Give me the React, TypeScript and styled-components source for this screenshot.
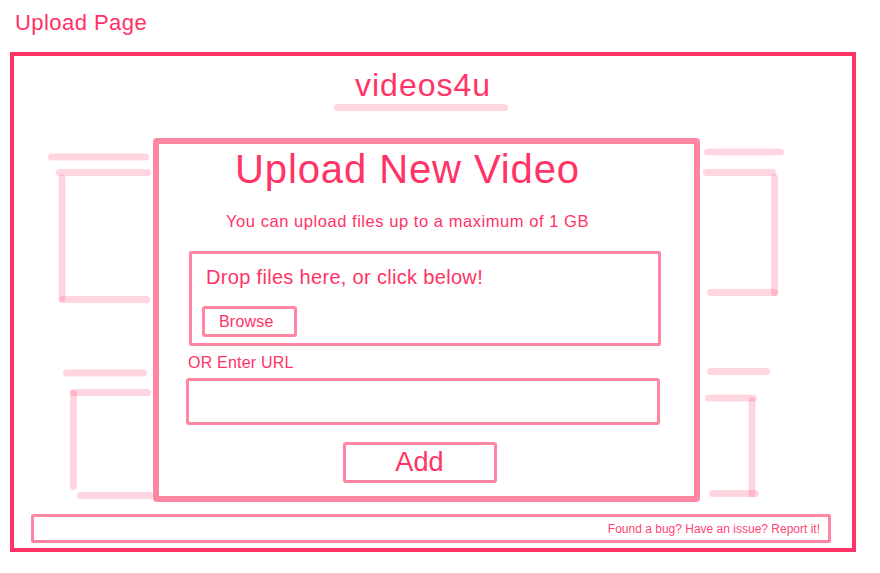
import React from "react";
import styled, { createGlobalStyle } from "styled-components";

const STRONG = "#ff3366";
const MID = "#ff86a3";
const LIGHT = "#ffd6e0";

const GlobalStyle = createGlobalStyle`
  html, body {
    margin: 0;
    padding: 0;
    background: #ffffff;
  }
  body {
    font-family: "Liberation Sans", Arial, sans-serif;
    color: ${STRONG};
  }
  * { box-sizing: border-box; }
`;

const Page = styled.div`
  padding: 12px 0 0 10px;
`;

const PageTitle = styled.h1`
  margin: 0 0 0 5px;
  height: 22px;
  font-size: 22px;
  line-height: 22px;
  letter-spacing: 0.45px;
  font-weight: 400;
  color: ${STRONG};
`;

const Frame = styled.div`
  margin-top: 18px;
  width: 846px;
  height: 500px;
  border: 4px solid ${STRONG};
  display: flex;
  flex-direction: column;
`;

const Header = styled.header`
  height: 82px;
  padding: 12.9px 0 0 320px;
  display: flex;
  flex-direction: column;
  align-items: flex-start;
`;

const Brand = styled.div`
  margin-left: 21px;
  font-size: 32px;
  line-height: 32px;
  letter-spacing: 1px;
`;

const BrandBar = styled.div`
  margin-top: 3px;
  width: 174px;
  height: 7px;
  border-radius: 4px;
  background: ${LIGHT};
`;

const Middle = styled.div`
  display: flex;
  height: 364px;
`;

const Card = styled.section`
  width: 547px;
  height: 364px;
  border: 6px solid ${MID};
  border-radius: 4px;
  padding-top: 5.4px;
  display: flex;
  flex-direction: column;
  align-items: flex-start;
`;

const Heading = styled.h2`
  margin: 0 0 0 76px;
  font-size: 40px;
  line-height: 40px;
  letter-spacing: 0.9px;
  font-weight: 400;
`;

const Note = styled.p`
  margin: 23.9px 0 0 67px;
  font-size: 16.5px;
  line-height: 16.5px;
  letter-spacing: 0.55px;
`;

const DropZone = styled.div`
  margin: 21.2px 0 0 30px;
  width: 472px;
  height: 95px;
  border: 3px solid ${MID};
  border-radius: 2px;
  padding: 13.4px 0 0 10px;
  display: flex;
  flex-direction: column;
  align-items: flex-start;
`;

const DropText = styled.div`
  margin-left: 4px;
  font-size: 20px;
  line-height: 20px;
  letter-spacing: 0.32px;
`;

const SketchButton = styled.button<{
  $w: number;
  $h: number;
  $size: number;
  $align: "start" | "center";
}>`
  width: ${(p) => p.$w}px;
  height: ${(p) => p.$h}px;
  border: 3px solid ${MID};
  border-radius: 3px;
  background: #fff;
  color: ${STRONG};
  font-family: inherit;
  font-size: ${(p) => p.$size}px;
  line-height: 1;
  padding: ${(p) => (p.$align === "start" ? "0 0 0 14px" : "0")};
  display: flex;
  align-items: center;
  justify-content: ${(p) => (p.$align === "start" ? "flex-start" : "center")};
  letter-spacing: 0.2px;
  cursor: pointer;
`;

const BrowseButton = styled(SketchButton)`
  margin-top: 19px;
`;

const AddButton = styled(SketchButton)`
  margin: 17px 0 0 183.5px;
`;

const FieldLabel = styled.label`
  margin: 8.8px 0 0 29px;
  font-size: 16px;
  line-height: 16px;
  letter-spacing: 0.2px;
`;

const UrlInput = styled.input`
  margin: 7.7px 0 0 27px;
  width: 474px;
  height: 47px;
  border: 3px solid ${MID};
  border-radius: 3px;
  background: #fff;
  outline: none;
  font-family: inherit;
  font-size: 16px;
  color: ${STRONG};
  padding: 0 10px;
`;

const Footer = styled.footer`
  margin: 12px 0 0 17px;
  width: 800px;
  height: 29px;
  border: 3px solid ${MID};
  border-radius: 2px;
  padding-right: 8px;
  display: flex;
  align-items: center;
  justify-content: flex-end;
  font-size: 12px;
  line-height: 12px;
  color: #ff4575;
`;

const Sketch = styled.svg`
  display: block;
  flex: none;
`;

type Seg = [number, number, number, number];

const leftSegs: Seg[] = [
  [37.5, 19, 131.5, 19],
  [45.5, 34.5, 133.5, 34.5],
  [48, 40, 48, 160.5],
  [48.5, 161.5, 132.5, 161.5],
  [52.5, 235, 129.5, 235],
  [59.5, 254.5, 133.5, 254.5],
  [59.5, 255.5, 59.5, 348.5],
  [66.5, 357.5, 135.5, 357.5],
];

const rightSegs: Seg[] = [
  [7.5, 14, 80.5, 14],
  [6.5, 34.5, 72.5, 34.5],
  [74.5, 39.5, 74.5, 154.5],
  [10.5, 154.5, 74.5, 154.5],
  [10.5, 233.5, 66.5, 233.5],
  [8.5, 260, 53.5, 260],
  [52, 262.5, 52, 355.5],
  [12.5, 355.5, 55.5, 355.5],
];

const SideSketch: React.FC<{ width: number; segs: Seg[] }> = ({ width, segs }) => (
  <Sketch width={width} height={364} viewBox={`0 0 ${width} 364`} aria-hidden="true">
    {segs.map(([x1, y1, x2, y2], i) => (
      <line
        key={i}
        x1={x1}
        y1={y1}
        x2={x2}
        y2={y2}
        stroke={STRONG}
        strokeOpacity={0.2}
        strokeWidth={7}
        strokeLinecap="round"
      />
    ))}
  </Sketch>
);

export default function App() {
  return (
    <>
      <GlobalStyle />
      <Page>
        <PageTitle>Upload Page</PageTitle>
        <Frame>
          <Header>
            <Brand>videos4u</Brand>
            <BrandBar />
          </Header>
          <Middle>
            <SideSketch width={139} segs={leftSegs} />
            <Card>
              <Heading>Upload New Video</Heading>
              <Note>You can upload files up to a maximum of 1 GB</Note>
              <DropZone>
                <DropText>Drop files here, or click below!</DropText>
                <BrowseButton $w={95} $h={30.5} $size={16} $align="start">
                  Browse
                </BrowseButton>
              </DropZone>
              <FieldLabel htmlFor="url">OR Enter URL</FieldLabel>
              <UrlInput id="url" type="text" />
              <AddButton $w={154} $h={40.5} $size={27} $align="center">
                Add
              </AddButton>
            </Card>
            <SideSketch width={152} segs={rightSegs} />
          </Middle>
          <Footer>Found a bug? Have an issue? Report it!</Footer>
        </Frame>
      </Page>
    </>
  );
}
